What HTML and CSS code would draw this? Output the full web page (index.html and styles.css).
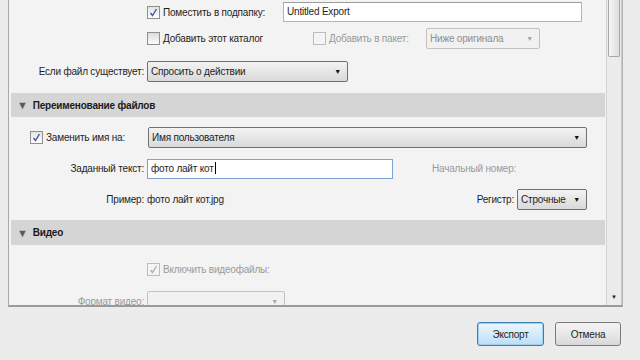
FILE: index.html
```html
<!DOCTYPE html>
<html>
  <head>
    <meta charset="utf-8">
    <title>Экспорт</title>
    <link rel="stylesheet" href="styles.css">
  </head>
  <body>
    <div class="panel">
      <div class="content">
        <!-- место экспорта (прокручено) -->
        <div class="row r1">
          <div class="lbl"></div>
          <span class="cb on"><svg width="11" height="11" viewBox="0 0 11 11"><polyline points="2.5,6 4.5,8.5 8.5,2" fill="none" stroke="#3a58a8" stroke-width="1.4"/></svg></span>
          <span class="cbt w-sub">Поместить в подпапку:</span>
          <div class="inp wide">Untitled Export</div>
        </div>
        <div class="row r2">
          <div class="lbl"></div>
          <span class="cb"></span>
          <span class="cbt w-cat">Добавить этот каталог</span>
          <span class="cb dis"></span>
          <span class="cbt dim w-pack">Добавить в пакет:</span>
          <div class="sel dis w-below">Ниже оригинала<span class="arr">▼</span></div>
        </div>
        <div class="row r3">
          <div class="lbl">Если файл существует:</div>
          <div class="sel w-exists">Спросить о действии<span class="arr">▼</span></div>
        </div>

        <div class="head h1"><span class="tri">▼</span>Переименование файлов</div>
        <div class="row r4">
          <span class="cb on first"><svg width="11" height="11" viewBox="0 0 11 11"><polyline points="2.5,6 4.5,8.5 8.5,2" fill="none" stroke="#3a58a8" stroke-width="1.4"/></svg></span>
          <span class="cbt w-rename">Заменить имя на:</span>
          <div class="sel grow">Имя пользователя<span class="arr">▼</span></div>
        </div>
        <div class="row r5">
          <div class="lbl">Заданный текст:</div>
          <div class="inp focus w-text">фото лайт кот<span class="caret"></span></div>
          <span class="dim start">Начальный номер:</span>
        </div>
        <div class="row r6">
          <div class="lbl">Пример:</div>
          <span class="val">фото лайт кот.jpg</span>
          <span class="case">Регистр:</span>
          <div class="sel w-case">Строчные<span class="arr">▼</span></div>
        </div>

        <div class="head h2"><span class="tri">▼</span>Видео</div>
        <div class="row r7">
          <div class="lbl"></div>
          <span class="cb dis"><svg width="11" height="11" viewBox="0 0 11 11"><polyline points="2.5,6 4.5,8.5 8.5,2" fill="none" stroke="#b0b0b0" stroke-width="1.4"/></svg></span>
          <span class="cbt dim">Включить видеофайлы:</span>
        </div>
        <div class="row r8">
          <div class="lbl dim">Формат видео:</div>
          <div class="sel dis w-video"><span class="arr">▼</span></div>
        </div>
      </div>
      <div class="scroll">
        <div class="thumb"></div>
        <div class="down">▼</div>
      </div>
    </div>
    <div class="buttons">
      <button class="btn def">Экспорт</button>
      <button class="btn">Отмена</button>
    </div>
  </body>
</html>
```

FILE: styles.css
```css
body {
  margin: 0;
  background: #ececec;
  font-family: "Liberation Sans", Arial, sans-serif;
  font-size: 10px;
  letter-spacing: -0.2px;
  color: #1e1e1e;
  width: 640px;
  height: 360px;
  overflow: hidden; }

.panel {
  margin-left: 8px;
  width: 613px;
  height: 305px;
  border-left: 1px solid #a8a8a8;
  border-right: 1px solid #b4b4b4;
  border-bottom: 2px solid #9a9a9a;
  background: #f3f3f3;
  display: flex;
  overflow: hidden; }
.content {
  flex: 1;
  padding-top: 2px;
  overflow: hidden; }

.row {
  display: flex;
  align-items: center;
  height: 21px; }
.r1 { height: 20px; }
.r2 { margin-top: 6px; }
.r3 { margin-top: 12px; height: 20px; }
.r4 { margin-top: 10px; }
.r5 { margin-top: 10px; }
.r6 { margin-top: 10px; }
.r7 { margin-top: 17px; height: 14px; }
.r8 { margin-top: 15px; height: 20px; align-items: flex-start; }

.lbl {
  width: 135px;
  padding-right: 3px;
  text-align: right;
  white-space: nowrap;
  flex-shrink: 0; }
.r8 .lbl { padding-top: 5px; }

.cb {
  width: 11px;
  height: 11px;
  border: 1px solid #8e8f8f;
  background: linear-gradient(#dcdcdc, #fbfbfb);
  display: inline-flex;
  flex-shrink: 0; }
.cb.on { background: linear-gradient(#e4e4e4, #ffffff); }
.cb.dis { border-color: #bcbcbc; background: #f4f4f4; }
.cb.first { margin-left: 21px; }
.cbt { margin-left: 3px; white-space: nowrap; }
.w-sub { width: 120px; }
.w-cat { width: 150px; }
.w-pack { width: 97px; }
.w-rename { width: 102px; }

.dim { color: #9a9a9a; }

.inp {
  height: 18px;
  line-height: 18px;
  border: 1px solid #b5b5b5;
  border-top-color: #9d9d9d;
  background: #ffffff;
  padding-left: 3px;
  box-sizing: content-box; }
.inp.wide { width: 294px; }
.inp.focus { border-color: #7fa3cf; }
.w-text { width: 241px; }
.caret {
  display: inline-block;
  width: 1px;
  height: 12px;
  background: #000;
  vertical-align: -2px;
  margin-left: 1px; }

.sel {
  position: relative;
  height: 19px;
  line-height: 19px;
  border: 1px solid #707070;
  border-radius: 2px;
  background: linear-gradient(#f3f3f3, #e6e6e6 50%, #d9d9d9);
  padding-left: 3px;
  white-space: nowrap; }
.sel .arr {
  position: absolute;
  right: 6px;
  top: 0;
  font-size: 7px;
  color: #111; }
.sel.dis {
  border-color: #c2c2c2;
  background: #f1f1f1;
  color: #8f8f8f; }
.sel.dis .arr { color: #a8a8a8; }
.w-below { width: 109px; }
.w-exists { width: 196px; }
.w-case { width: 65px; }
.w-video { width: 133px; height: 22px; }
.grow { width: 434px; }

.start { margin-left: 39px; }
.val { width: 301px; padding-left: 0; }
.case { width: 66px; text-align: right; padding-right: 3px; }

.head {
  margin-left: 2px;
  margin-right: 1px;
  background: #d5d5d5;
  font-weight: bold;
  color: #1a1a1a;
  display: flex;
  align-items: center; }
.h1 { height: 24px; margin-top: 12px; }
.h2 { height: 25px; margin-top: 10px; }
.tri {
  font-size: 11px;
  color: #5a5a5a;
  margin-left: 6px;
  margin-right: 5px; }

.scroll {
  width: 14px;
  border-left: 1px solid #d2d2d2;
  border-right: 1px solid #c8c8c8;
  background: #ececec;
  position: relative; }
.thumb {
  margin: 0 1px;
  height: 56px;
  border: 1px solid #a7a7a7;
  border-top: none;
  border-radius: 0 0 2px 2px;
  background: linear-gradient(90deg, #f6f6f6, #dedede); }
.down {
  position: absolute;
  bottom: 5px;
  left: 4px;
  font-size: 6px;
  color: #222; }

.buttons {
  display: flex;
  justify-content: flex-end;
  gap: 11px;
  padding-right: 19px;
  margin-top: 15px; }
.btn {
  font-family: "Liberation Sans", Arial, sans-serif;
  font-size: 10px;
  letter-spacing: -0.2px;
  color: #1e1e1e;
  height: 24px;
  border: 1px solid #7a7a7a;
  border-radius: 3px;
  background: linear-gradient(#f4f4f4, #e8e8e8 50%, #d8d8d8);
  padding: 0; }
.btn.def {
  width: 67px;
  border-color: #3c7fb1;
  background: linear-gradient(#eaf5fd, #d6ebfa 50%, #bcdcf4);
  box-shadow: inset 0 0 0 1px #9fd0f0; }
.btn:not(.def) { width: 66px; }
```
